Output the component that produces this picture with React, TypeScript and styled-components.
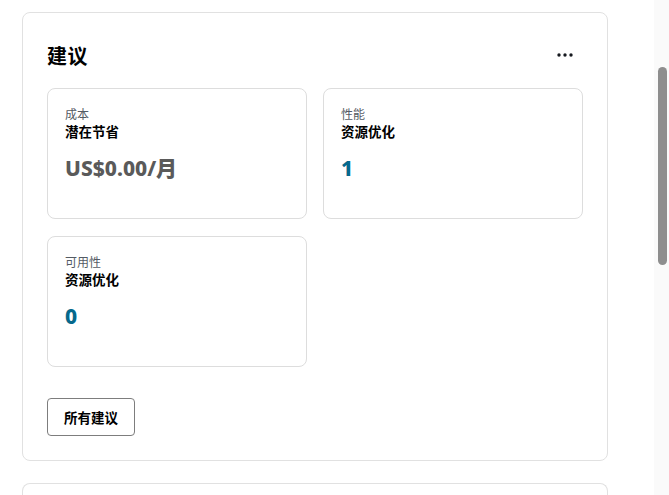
import * as React from "react";
import styled, { createGlobalStyle } from "styled-components";

const GlobalStyle = createGlobalStyle`
  html, body {
    margin: 0;
    padding: 0;
    background: #ffffff;
    overflow: hidden;
  }
  body {
    font-family: "Noto Sans", "Noto Sans CJK SC", sans-serif;
    color: #16191f;
  }
`;

const Shell = styled.div`
  display: flex;
  width: 669px;
  height: 495px;
  overflow: hidden;
`;

const Content = styled.div`
  flex: 1;
  display: flex;
  flex-direction: column;
  gap: 22px;
  padding: 12px 46px 0 22px;
`;

const Panel = styled.section`
  border: 1px solid #e1e1e1;
  border-radius: 8px;
  padding: 28px 24px 24px 24px;
  background: #fff;
`;

const Stub = styled.div`
  border: 1px solid #e1e1e1;
  border-bottom: none;
  border-radius: 8px 8px 0 0;
  height: 40px;
`;

const Header = styled.div`
  display: flex;
  align-items: center;
  justify-content: space-between;
  height: 28px;
  margin-bottom: 19px;
`;

const Title = styled.h2`
  margin: 0;
  font-size: 20px;
  font-weight: 700;
  color: #000;
  letter-spacing: 0.5px;
`;

const MoreButton = styled.button`
  border: none;
  background: none;
  padding: 4px;
  margin-right: 6px;
  display: flex;
  cursor: pointer;
`;

const Grid = styled.div`
  display: grid;
  grid-template-columns: 260px 260px;
  column-gap: 16px;
  row-gap: 17px;
`;

const Card = styled.div`
  border: 1px solid #dddddd;
  border-radius: 8px;
  height: 131px;
  box-sizing: border-box;
  padding: 17px 17px 15px;
  display: flex;
  flex-direction: column;
`;

const Category = styled.div`
  font-size: 12px;
  line-height: 17px;
  color: #545b64;
`;

const Label = styled.div`
  font-size: 13.5px;
  line-height: 19px;
  font-weight: 700;
  color: #000;
`;

const Value = styled.div<{ tone: "muted" | "link" }>`
  margin-top: 12px;
  font-size: 21px;
  line-height: 28px;
  font-weight: 800;
  color: ${(p) => (p.tone === "link" ? "#06698c" : "#5a5a5a")};
`;

const Footer = styled.div`
  margin-top: 31px;
`;

const OutlineButton = styled.button`
  font-family: inherit;
  font-size: 13.5px;
  font-weight: 700;
  color: #000;
  background: #fff;
  border: 1px solid #7d7d7d;
  border-radius: 4px;
  height: 38px;
  padding: 0 16px;
  cursor: pointer;
`;

const Track = styled.div`
  width: 16px;
  flex-shrink: 0;
  background: #fafafa;
  display: flex;
  justify-content: center;
`;

const Thumb = styled.div`
  width: 9px;
  height: 198px;
  margin-top: 67px;
  border-radius: 5px;
  background: #8e8e8e;
`;

const Dots = () => (
  <svg width="16" height="4" viewBox="0 0 16 4">
    <circle cx="2" cy="2" r="1.7" fill="#16191f" />
    <circle cx="8" cy="2" r="1.7" fill="#16191f" />
    <circle cx="14" cy="2" r="1.7" fill="#16191f" />
  </svg>
);

type Rec = {
  category: string;
  label: string;
  value: string;
  tone: "muted" | "link";
};

const recs: Rec[] = [
  { category: "成本", label: "潜在节省", value: "US$0.00/月", tone: "muted" },
  { category: "性能", label: "资源优化", value: "1", tone: "link" },
  { category: "可用性", label: "资源优化", value: "0", tone: "link" },
];

export default function App() {
  return (
    <Shell>
      <GlobalStyle />
      <Content>
        <Panel>
          <Header>
            <Title>建议</Title>
            <MoreButton aria-label="更多">
              <Dots />
            </MoreButton>
          </Header>
          <Grid>
            {recs.map((r) => (
              <Card key={r.category}>
                <Category>{r.category}</Category>
                <Label>{r.label}</Label>
                <Value tone={r.tone}>{r.value}</Value>
              </Card>
            ))}
          </Grid>
          <Footer>
            <OutlineButton>所有建议</OutlineButton>
          </Footer>
        </Panel>
        <Stub />
      </Content>
      <Track>
        <Thumb />
      </Track>
    </Shell>
  );
}
